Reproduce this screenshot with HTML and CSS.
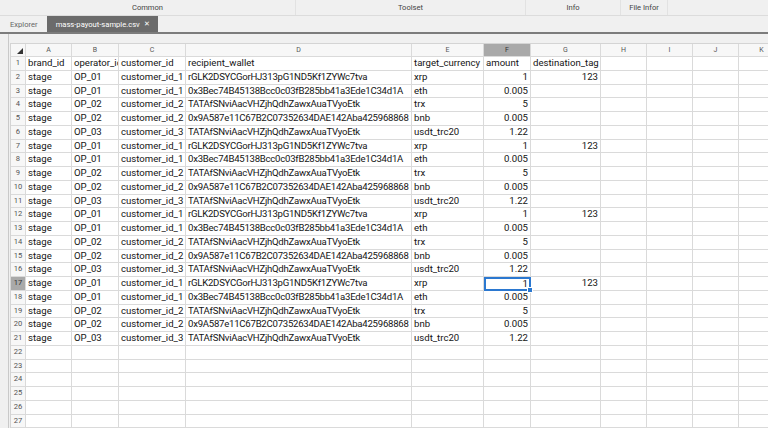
FILE: index.html
```html
<!DOCTYPE html>
<html lang="en">
<head>
  <meta charset="UTF-8">
  <title>mass-payout-sample.csv</title>
  <link rel="stylesheet" href="styles.css">
</head>
<body>

  <div class="menubar">
    <div class="menu-group common">Common</div>
    <div class="menu-group toolset">Toolset</div>
    <div class="menu-group info">Info</div>
    <div class="menu-group fileinfo">File Infor</div>
  </div>

  <div class="tabs">
    <div class="tab">Explorer</div>
    <div class="tab active">mass-payout-sample.csv <span class="close">&#x2715;</span></div>
  </div>

  <div class="panel">
    <div class="sheet-wrap">
      <div class="sheet" id="sheet"></div>
    </div>
  </div>

  <script>
    const cols = ['A', 'B', 'C', 'D', 'E', 'F', 'G', 'H', 'I', 'J', 'K'];
    const header = ['brand_id', 'operator_id', 'customer_id', 'recipient_wallet', 'target_currency', 'amount', 'destination_tag'];
    const block = [
      ['stage', 'OP_01', 'customer_id_1', 'rGLK2DSYCGorHJ313pG1ND5Kf1ZYWc7tva', 'xrp', '1', '123'],
      ['stage', 'OP_01', 'customer_id_1', '0x3Bec74B45138Bcc0c03fB285bb41a3Ede1C34d1A', 'eth', '0.005', ''],
      ['stage', 'OP_02', 'customer_id_2', 'TATAfSNviAacVHZjhQdhZawxAuaTVyoEtk', 'trx', '5', ''],
      ['stage', 'OP_02', 'customer_id_2', '0x9A587e11C67B2C07352634DAE142Aba425968868', 'bnb', '0.005', ''],
      ['stage', 'OP_03', 'customer_id_3', 'TATAfSNviAacVHZjhQdhZawxAuaTVyoEtk', 'usdt_trc20', '1.22', '']
    ];
    const rows = [header];
    for (let i = 0; i < 4; i++) rows.push(...block);

    const sheet = document.getElementById('sheet');
    let html = '<div class="corner"></div>';
    cols.forEach(c => {
      html += '<div class="colhead' + (c === 'F' ? ' picked' : '') + '">' + c + '</div>';
    });

    for (let r = 1; r <= 27; r++) {
      const data = rows[r - 1] || [];
      html += '<div class="rowhead' + (r === 17 ? ' picked' : '') + '">' + r + '</div>';
      cols.forEach((c, i) => {
        const val = data[i] || '';
        let cls = 'cell';
        if (r > 1 && i === 3) cls += ' wallet';
        if (r > 1 && (i === 5 || i === 6)) cls += ' num';
        if (r === 1 && i === 6) cls += ' spill';
        if (r === 17 && c === 'F') cls += ' selected';
        html += '<div class="' + cls + '">' + val + '</div>';
      });
    }
    sheet.innerHTML = html;
  </script>

</body>
</html>
```

FILE: styles.css
```css
body {
  margin: 0;
  background-color: #f0f0f0;
  font-family: Roboto, sans-serif;
  overflow: hidden;
  height: 428px;
}
.menubar {
  display: flex;
  height: 15px;
  border-bottom: 1px solid #dcdcdc;
  font-size: 7.6px;
  color: #444;
}
.menu-group {
  display: flex;
  align-items: center;
  justify-content: center;
  border-right: 1px solid #e2e2e2;
}
.common { width: 295px; }
.toolset { width: 229px; }
.info { width: 94px; }
.fileinfo { width: 46px; }

.tabs {
  display: flex;
  height: 16px;
  border-bottom: 2px solid #7c7c7c;
  font-size: 7.6px;
}
.tab {
  display: flex;
  align-items: center;
  padding: 0 9px 0 10px;
  color: #666;
  white-space: nowrap;
}
.tab.active {
  justify-content: space-between;
  width: 111px;
  box-sizing: border-box;
  padding: 0 8px 0 9px;
  background-color: #6b6b6b;
  color: #fff;
}
.tab .close {
  font-size: 7px;
}

.panel {
  margin-left: 8px;
  border-left: 1px solid #c9c9c9;
  padding: 9px 0 0 1px;
  height: 400px;
}
.sheet-wrap {
  overflow: hidden;
  background-color: #fff;
}
.sheet {
  display: grid;
  grid-template-columns: 15px 46px 47px 67px 226px 72px 47px 70px 46px 46px 46px 46px;
  grid-template-rows: 13px repeat(27, 13.75px);
  width: max-content;
  border-top: 1px solid #d4d4d4;
  border-left: 1px solid #d4d4d4;
  font-size: 9.6px;
  color: #141414;
}
.sheet > div {
  box-sizing: border-box;
  border-right: 1px solid #dadada;
  border-bottom: 1px solid #dadada;
  white-space: nowrap;
  overflow: hidden;
  line-height: 12.75px;
}
.corner {
  position: relative;
  background-color: #f7f7f7;
}
.corner::after {
  content: "";
  position: absolute;
  right: 2px;
  bottom: 2px;
  border-left: 6px solid transparent;
  border-bottom: 6px solid #333;
}
.colhead {
  background-color: #f7f7f7;
  text-align: center;
  font-size: 7px;
  color: #555;
}
.rowhead {
  background-color: #f7f7f7;
  text-align: center;
  font-size: 7.6px;
  color: #555;
}
.picked {
  background-color: #a9a9a9;
  color: #333;
}
.cell {
  padding: 0 2px;
}
.cell.wallet {
  letter-spacing: -0.25px;
}
.cell.num {
  text-align: right;
}
.sheet > .cell.spill {
  overflow: visible;
}
.cell.selected {
  position: relative;
  overflow: visible;
  border: 1px solid #2b78d0;
  outline: 1px solid #2b78d0;
  outline-offset: -2px;
}
.cell.selected::after {
  content: "";
  position: absolute;
  right: -3px;
  bottom: -3px;
  width: 4px;
  height: 4px;
  background-color: #2b78d0;
  border: 1px solid #fff;
}
```
